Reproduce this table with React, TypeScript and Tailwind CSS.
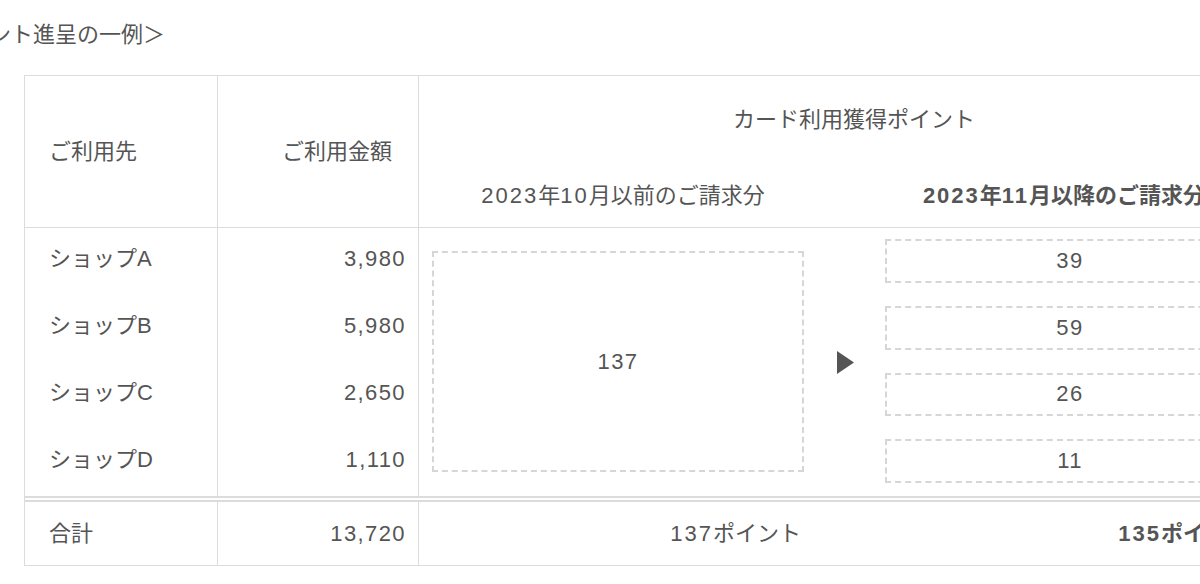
import React from "react";

const border = "border-[#dcdcdc]";

function Arrow() {
  return (
    <svg width="17" height="23" viewBox="0 0 17 23" className="shrink-0">
      <polygon points="0,0 17,11.5 0,23" fill="#555555" />
    </svg>
  );
}

function N({ children }: { children: React.ReactNode }) {
  return <span className="tracking-[2px]">{children}</span>;
}

export default function App() {
  const shops = ["ショップA", "ショップB", "ショップC", "ショップD"];
  const amounts = ["3,980", "5,980", "2,650", "1,110"];
  const pts = ["39", "59", "26", "11"];
  return (
    <div className="w-[1200px] h-[584px] overflow-hidden bg-white text-[#555555] font-['Liberation_Sans','Noto_Sans_CJK_JP',sans-serif]">
      <p className="-ml-[77px] pt-[20px] text-[22px] leading-[30px] whitespace-nowrap">＜ポイント進呈の一例＞</p>
      <div className={`ml-[24px] mt-[25px] w-[1266px] border ${border} text-[22px] leading-[30px]`}>
        {/* header */}
        <div className={`flex h-[152px] border-b ${border}`}>
          <div className={`w-[193px] shrink-0 border-r ${border} flex items-center pl-[24px]`}>ご利用先</div>
          <div className={`w-[201px] shrink-0 border-r ${border} flex items-center justify-end pr-[26px]`}>ご利用金額</div>
          <div className="flex-1 flex flex-col">
            <div className="h-[88px] flex items-center justify-center">カード利用獲得ポイント</div>
            <div className="flex-1 flex">
              <div className="w-[408px] shrink-0 flex items-center justify-center whitespace-nowrap">
                <N>2023</N>年<N>10</N>月以前のご請求分
              </div>
              <div className="flex-1 flex items-center justify-center pl-[12px] font-bold whitespace-nowrap">
                <N>2023</N>年<N>11</N>月以降のご請求分
              </div>
            </div>
          </div>
        </div>
        {/* body */}
        <div className="flex h-[268px]">
          <div className={`w-[193px] shrink-0 border-r ${border} flex flex-col`}>
            {shops.map((s) => (
              <div key={s} className="flex-1 flex items-center pl-[24px] pb-[6px]">{s}</div>
            ))}
          </div>
          <div className={`w-[201px] shrink-0 border-r ${border} flex flex-col`}>
            {amounts.map((a) => (
              <div key={a} className="flex-1 flex items-center justify-end pr-[12px] pb-[6px] tracking-[1.4px]">{a}</div>
            ))}
          </div>
          <div className="w-[408px] shrink-0 pl-[13px] pr-[23px] pt-[23px] pb-[24px] flex">
            <div className="flex-1 border-2 border-dashed border-[#d6d6d6] flex items-center justify-center tracking-[1.4px]">137</div>
          </div>
          <div className="flex-1 flex items-center pl-[10px] pr-[34px]">
            <Arrow />
            <div className="ml-[31px] flex-1 flex flex-col gap-[23px] pt-[11px] pb-[13px] self-stretch">
              {pts.map((p) => (
                <div key={p} className="h-[44px] border-2 border-dashed border-[#d6d6d6] flex items-center justify-center tracking-[1.4px]">{p}</div>
              ))}
            </div>
          </div>
        </div>
        {/* footer */}
        <div className={`flex h-[69px] border-t-[6px] border-double ${border}`}>
          <div className={`w-[193px] shrink-0 border-r ${border} flex items-center pl-[24px]`}>合計</div>
          <div className={`w-[201px] shrink-0 border-r ${border} flex items-center justify-end pr-[12px] tracking-[1.4px]`}>13,720</div>
          <div className="w-[408px] shrink-0 flex items-center justify-end pr-[26px] whitespace-nowrap">
            <N>137</N>ポイント
          </div>
          <div className="flex-1 flex items-center justify-end pr-[40px] font-bold whitespace-nowrap">
            <N>135</N>ポイント
          </div>
        </div>
      </div>
    </div>
  );
}
